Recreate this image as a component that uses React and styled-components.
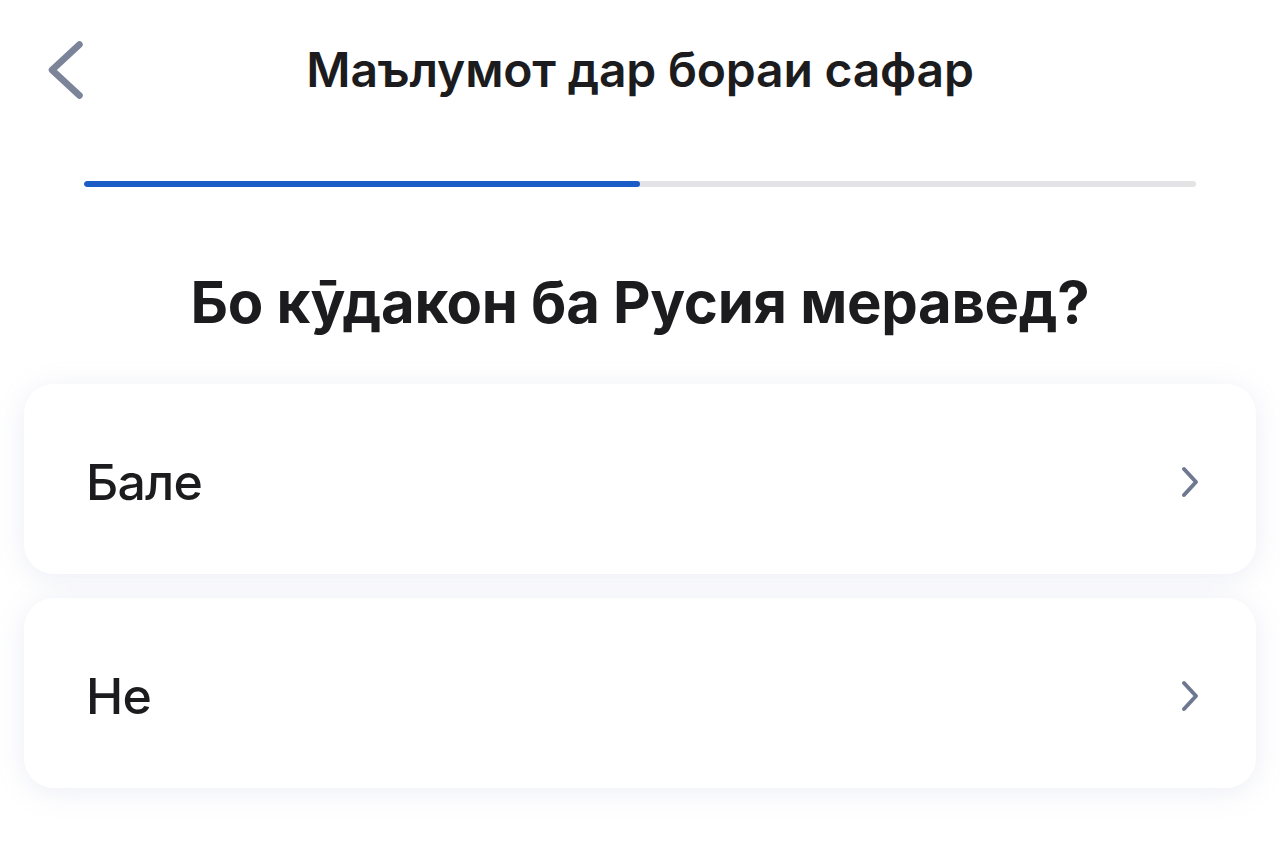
import React from "react";
import styled, { createGlobalStyle } from "styled-components";

const Global = createGlobalStyle`
  html, body { margin: 0; padding: 0; background: #ffffff; }
  body { font-family: Inter, "Noto Sans", sans-serif; color: #1c1c1e; }
`;

const Page = styled.div`
  width: 1280px;
  height: 862px;
  box-sizing: border-box;
  display: flex;
  flex-direction: column;
  background: #fff;
  overflow: hidden;
`;

const Header = styled.header`
  position: relative;
  height: 140px;
  display: flex;
  align-items: center;
  justify-content: center;
`;

const BackButton = styled.button`
  position: absolute;
  left: 40px;
  top: 34px;
  width: 52px;
  height: 72px;
  border: 0;
  background: transparent;
  padding: 0;
  display: flex;
  align-items: center;
  justify-content: center;
`;

const Title = styled.h1`
  margin: 0;
  font-size: 48px;
  line-height: 58px;
  font-weight: 600;
  letter-spacing: -0.2px;
  color: #1c1c1e;
`;

const Progress = styled.div`
  margin: 41px 84px 0;
  height: 6px;
  border-radius: 3px;
  background: #e4e4e6;
  overflow: hidden;
`;

const ProgressFill = styled.div`
  height: 100%;
  border-radius: 3px;
  background: #1c5cc6;
`;

const Question = styled.h2`
  margin: 80px 0 0;
  text-align: center;
  font-size: 58px;
  line-height: 70px;
  font-weight: 700;
  letter-spacing: -0.3px;
  color: #1c1c1e;
`;

const Options = styled.div`
  margin: 47px 24px 0;
  display: flex;
  flex-direction: column;
  gap: 24px;
`;

const Option = styled.button`
  height: 190px;
  border: 0;
  border-radius: 30px;
  background: #fff;
  box-shadow: 0 4px 28px rgba(140, 150, 200, 0.16);
  display: flex;
  align-items: center;
  justify-content: space-between;
  padding: 6px 54px 0 62px;
  box-sizing: border-box;
  font-family: inherit;
  font-size: 50px;
  font-weight: 500;
  letter-spacing: -0.8px;
  color: #1c1c1e;
  cursor: pointer;
`;

const Back = () => (
  <svg width="44" height="66" viewBox="0 0 44 66">
    <path d="M35.5 7.5 L8 33 L35.5 58.5" fill="none" stroke="#7b8499" strokeWidth="6.5" strokeLinecap="round" strokeLinejoin="round" />
  </svg>
);

const Chevron = () => (
  <svg width="24" height="36" viewBox="0 0 24 36">
    <path d="M6 5 L18 18 L6 31" fill="none" stroke="#6e7891" strokeWidth="4" strokeLinecap="round" strokeLinejoin="round" />
  </svg>
);

export default function App() {
  const progress = 0.5;
  return (
    <Page>
      <Global />
      <Header>
        <BackButton aria-label="back"><Back /></BackButton>
        <Title>Маълумот дар бораи сафар</Title>
      </Header>
      <Progress>
        <ProgressFill style={{ width: `${progress * 100}%` }} />
      </Progress>
      <Question>Бо кӯдакон ба Русия меравед?</Question>
      <Options>
        <Option>Бале<Chevron /></Option>
        <Option>Не<Chevron /></Option>
      </Options>
    </Page>
  );
}
